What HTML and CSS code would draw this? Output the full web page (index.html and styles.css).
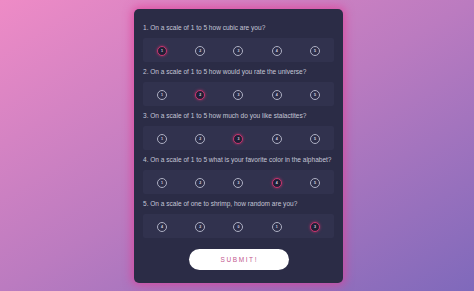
FILE: index.html
```html
<!DOCTYPE html>
<html>
<head>
<meta charset="utf-8">
<link rel="stylesheet" href="styles.css">
</head>
<body>
<div class="page">
  <form class="card">
    <div class="question">
      <p class="label">1. On a scale of 1 to 5 how cubic are you?</p>
      <div class="options">
        <span class="opt"><span class="dot sel">1</span></span>
        <span class="opt"><span class="dot">2</span></span>
        <span class="opt"><span class="dot">3</span></span>
        <span class="opt"><span class="dot">4</span></span>
        <span class="opt"><span class="dot">5</span></span>
      </div>
    </div>
    <div class="question">
      <p class="label">2. On a scale of 1 to 5 how would you rate the universe?</p>
      <div class="options">
        <span class="opt"><span class="dot">1</span></span>
        <span class="opt"><span class="dot sel">2</span></span>
        <span class="opt"><span class="dot">3</span></span>
        <span class="opt"><span class="dot">4</span></span>
        <span class="opt"><span class="dot">5</span></span>
      </div>
    </div>
    <div class="question">
      <p class="label">3. On a scale of 1 to 5 how much do you like stalactites?</p>
      <div class="options">
        <span class="opt"><span class="dot">1</span></span>
        <span class="opt"><span class="dot">2</span></span>
        <span class="opt"><span class="dot sel">3</span></span>
        <span class="opt"><span class="dot">4</span></span>
        <span class="opt"><span class="dot">5</span></span>
      </div>
    </div>
    <div class="question">
      <p class="label">4. On a scale of 1 to 5 what is your favorite color in the alphabet?</p>
      <div class="options">
        <span class="opt"><span class="dot">1</span></span>
        <span class="opt"><span class="dot">2</span></span>
        <span class="opt"><span class="dot">3</span></span>
        <span class="opt"><span class="dot sel">4</span></span>
        <span class="opt"><span class="dot">5</span></span>
      </div>
    </div>
    <div class="question">
      <p class="label">5. On a scale of one to shrimp, how random are you?</p>
      <div class="options">
        <span class="opt"><span class="dot">4</span></span>
        <span class="opt"><span class="dot">2</span></span>
        <span class="opt"><span class="dot">0</span></span>
        <span class="opt"><span class="dot">1</span></span>
        <span class="opt"><span class="dot sel">3</span></span>
      </div>
    </div>
    <div class="actions">
      <button type="button" class="submit">SUBMIT!</button>
    </div>
  </form>
</div>
</body>
</html>
```
FILE: styles.css
```css
html, body {
  margin: 0;
  padding: 0;
  height: 100%;
}
body {
  background: linear-gradient(to bottom right, #ee8bc6 0%, #bb7bc0 50%, #7f69bb 100%);
  font-family: "Liberation Sans", Arial, sans-serif;
  overflow: hidden;
}
.page {
  display: flex;
  justify-content: center;
  padding: 9px 0 0 3px;
}
.card {
  width: 191px;
  padding: 14px 9px 13px 9px;
  background: #2b2c46;
  border-radius: 5px;
  box-shadow: 0 0 10px 2px rgba(225, 60, 150, 0.75);
  display: flex;
  flex-direction: column;
  gap: 5px;
}
.question {
  display: flex;
  flex-direction: column;
  gap: 5px;
}
.label {
  margin: 0;
  font-size: 6.55px;
  line-height: 10px;
  color: #c5c6d6;
  white-space: nowrap;
}
.options {
  height: 24px;
  background: #31324e;
  border-radius: 2px;
  display: grid;
  grid-template-columns: repeat(5, 1fr);
  align-items: center;
  justify-items: center;
}
.opt {
  display: flex;
  padding-top: 1px;
}
.dot {
  width: 8px;
  height: 8px;
  border: 1px solid #aeb0c4;
  border-radius: 50%;
  display: flex;
  align-items: center;
  justify-content: center;
  font-size: 3.6px;
  font-weight: bold;
  color: #d8d8e4;
  background: #2d2e49;
}
.dot.sel {
  border-color: #c8356f;
  background: #1f1f35;
  box-shadow: 0 0 3px rgba(200, 50, 110, 0.8);
}
.actions {
  display: flex;
  justify-content: center;
  padding-top: 6px;
}
.submit {
  width: 100px;
  height: 21px;
  border: none;
  border-radius: 11px;
  background: #ffffff;
  color: #c2588f;
  font-family: "Liberation Sans", Arial, sans-serif;
  font-size: 6.5px;
  letter-spacing: 1.6px;
  padding: 0 0 0 1.6px;
}
```
